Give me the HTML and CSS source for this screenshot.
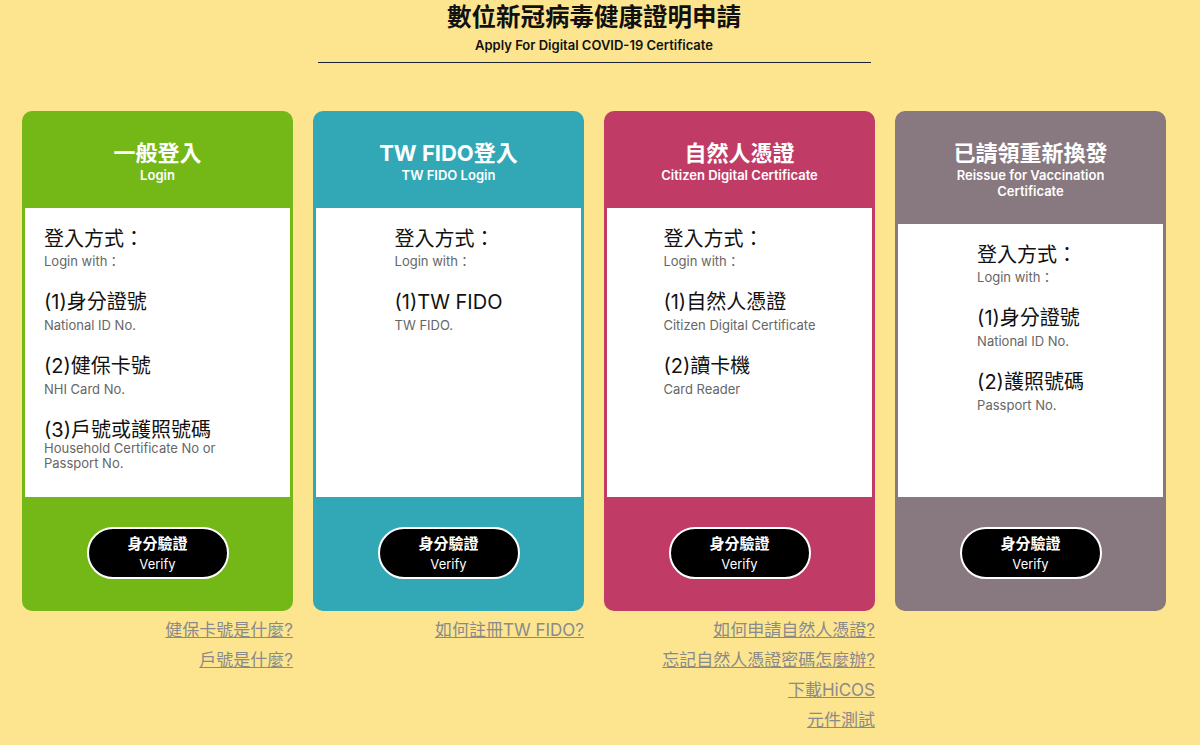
FILE: index.html
```html
<!DOCTYPE html>
<html lang="zh-Hant">
<head>
<meta charset="utf-8">
<title>數位新冠病毒健康證明申請</title>
<link rel="stylesheet" href="styles.css">
</head>
<body>
<div class="page">
  <header class="top">
    <h1 class="top-title">數位新冠病毒健康證明申請</h1>
    <p class="top-sub">Apply For Digital COVID-19 Certificate</p>
    <hr class="top-line">
  </header>

  <main class="cards">
    <section class="col">
      <div class="card card-green">
        <div class="card-head">
          <div class="card-title">一般登入</div>
          <div class="card-sub">Login</div>
        </div>
        <div class="card-body body-left">
          <div class="info">
            <div class="item-title">登入方式：</div>
            <div class="item-sub">Login with：</div>
            <div class="item">
              <div class="item-title">(1)身分證號</div>
              <div class="item-sub">National ID No.</div>
            </div>
            <div class="item">
              <div class="item-title">(2)健保卡號</div>
              <div class="item-sub">NHI Card No.</div>
            </div>
            <div class="item">
              <div class="item-title">(3)戶號或護照號碼</div>
              <div class="item-sub tight">Household Certificate No or<br>Passport No.</div>
            </div>
          </div>
        </div>
        <div class="card-foot">
          <button class="verify"><span class="v-zh">身分驗證</span><span class="v-en">Verify</span></button>
        </div>
      </div>
      <nav class="links">
        <a href="#">健保卡號是什麼?</a>
        <a href="#">戶號是什麼?</a>
      </nav>
    </section>

    <section class="col">
      <div class="card card-teal">
        <div class="card-head">
          <div class="card-title">TW FIDO登入</div>
          <div class="card-sub">TW FIDO Login</div>
        </div>
        <div class="card-body">
          <div class="info">
            <div class="item-title">登入方式：</div>
            <div class="item-sub">Login with：</div>
            <div class="item">
              <div class="item-title">(1)TW FIDO</div>
              <div class="item-sub">TW FIDO.</div>
            </div>
          </div>
        </div>
        <div class="card-foot">
          <button class="verify"><span class="v-zh">身分驗證</span><span class="v-en">Verify</span></button>
        </div>
      </div>
      <nav class="links">
        <a href="#">如何註冊TW FIDO?</a>
      </nav>
    </section>

    <section class="col">
      <div class="card card-pink">
        <div class="card-head">
          <div class="card-title">自然人憑證</div>
          <div class="card-sub">Citizen Digital Certificate</div>
        </div>
        <div class="card-body">
          <div class="info">
            <div class="item-title">登入方式：</div>
            <div class="item-sub">Login with：</div>
            <div class="item">
              <div class="item-title">(1)自然人憑證</div>
              <div class="item-sub">Citizen Digital Certificate</div>
            </div>
            <div class="item">
              <div class="item-title">(2)讀卡機</div>
              <div class="item-sub">Card Reader</div>
            </div>
          </div>
        </div>
        <div class="card-foot">
          <button class="verify"><span class="v-zh">身分驗證</span><span class="v-en">Verify</span></button>
        </div>
      </div>
      <nav class="links">
        <a href="#">如何申請自然人憑證?</a>
        <a href="#">忘記自然人憑證密碼怎麼辦?</a>
        <a href="#">下載HiCOS</a>
        <a href="#">元件測試</a>
      </nav>
    </section>

    <section class="col">
      <div class="card card-mauve">
        <div class="card-head">
          <div class="card-title">已請領重新換發</div>
          <div class="card-sub">Reissue for Vaccination<br>Certificate</div>
        </div>
        <div class="card-body">
          <div class="info">
            <div class="item-title">登入方式：</div>
            <div class="item-sub">Login with：</div>
            <div class="item">
              <div class="item-title">(1)身分證號</div>
              <div class="item-sub">National ID No.</div>
            </div>
            <div class="item">
              <div class="item-title">(2)護照號碼</div>
              <div class="item-sub">Passport No.</div>
            </div>
          </div>
        </div>
        <div class="card-foot">
          <button class="verify"><span class="v-zh">身分驗證</span><span class="v-en">Verify</span></button>
        </div>
      </div>
    </section>
  </main>
</div>
</body>
</html>
```

FILE: styles.css
```css
* { box-sizing: border-box; }

html, body {
  margin: 0;
  padding: 0;
  background: #fde590;
}

body {
  font-family: Inter, "Noto Sans CJK TC", "Noto Sans", sans-serif;
  color: #111;
}

.page {
  width: 1188px;
}

.top {
  display: flex;
  flex-direction: column;
  align-items: center;
}

.top-title {
  margin: 2px 0 0;
  font-size: 24.5px;
  line-height: 30px;
  font-weight: 700;
  color: #111;
}

.top-sub {
  margin: 4px 0 0;
  font-size: 13px;
  line-height: 18px;
  font-weight: 600;
  color: #111;
}

.top-line {
  width: 553px;
  margin: 8px 0 0;
  border: 0;
  border-top: 1px solid #1c2232;
  height: 0;
}

.cards {
  display: flex;
  justify-content: center;
  gap: 20px;
  margin-top: 48px;
}

.col {
  width: 271px;
  display: flex;
  flex-direction: column;
}

.card {
  height: 500px;
  border-radius: 10px;
  display: flex;
  flex-direction: column;
  padding: 0 3px;
}

.card-green { background: #74b818; }
.card-teal { background: #32a8b7; }
.card-pink { background: #c03c66; }
.card-mauve { background: #88787f; }

.card-head {
  padding: 29px 0 25px;
  text-align: center;
  color: #fff;
}

.card-title {
  font-size: 22px;
  line-height: 26px;
  font-weight: 700;
}

.card-sub {
  margin-top: 1px;
  font-size: 13px;
  line-height: 16px;
  font-weight: 600;
}

.card-body {
  flex: 1;
  background: #fff;
  padding: 18px 19px 0;
  text-align: center;
}

.card-body.body-left {
  text-align: left;
}

.info {
  display: inline-block;
  text-align: left;
}

.item-title {
  font-size: 20px;
  line-height: 26px;
  color: #111;
}

.item-sub {
  margin-top: 2px;
  font-size: 13px;
  line-height: 15px;
  color: #666;
}

.item {
  margin-top: 20px;
}

.item .item-sub {
  margin-top: 3px;
}

.item .item-sub.tight {
  margin-top: -2px;
}

.card-foot {
  height: 114px;
  display: flex;
  justify-content: center;
  padding-top: 30px;
}

.verify {
  width: 142px;
  height: 52px;
  border-radius: 26px;
  border: 2px solid #fff;
  background: #000;
  color: #fff;
  display: flex;
  flex-direction: column;
  align-items: center;
  justify-content: center;
  font-family: inherit;
  padding: 0;
  cursor: pointer;
}

.v-zh {
  font-size: 15px;
  line-height: 20px;
  font-weight: 700;
}

.v-en {
  margin-top: 2px;
  font-size: 13px;
  line-height: 17px;
}

.links {
  display: flex;
  flex-direction: column;
  align-items: flex-end;
  margin-top: 4px;
}

.links a {
  font-size: 17px;
  line-height: 30px;
  color: #8a8a8a;
  text-decoration: underline;
}
```
